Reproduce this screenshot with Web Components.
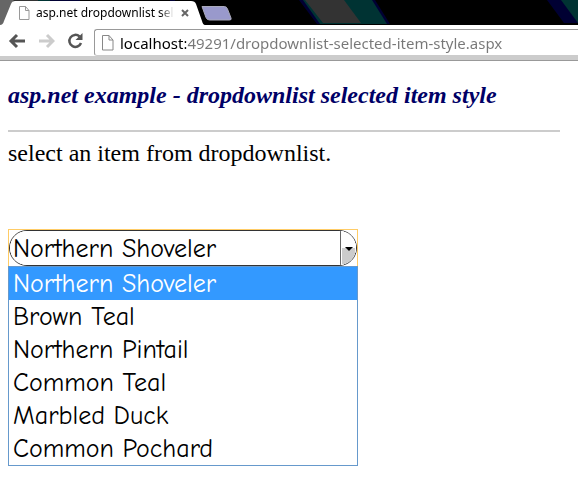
<!DOCTYPE html>
<html lang="en">
<head>
<meta charset="utf-8">
<title>asp.net dropdownlist selected item style</title>
<style>
    body {
        margin: 0;
        min-height: 100vh;
        background: #fff;
        font-family: "Liberation Serif", serif;
    }
</style>
</head>
<body>

<browser-window>
    <browser-tab slot="tabs">asp.net dropdownlist selected item style</browser-tab>
    <nav-bar slot="toolbar" url="localhost:49291/dropdownlist-selected-item-style.aspx"></nav-bar>
    <example-page>
        <span slot="title">asp.net example - dropdownlist selected item style</span>
        <span slot="intro">select an item from dropdownlist.</span>
        <drop-down label="select an item from dropdownlist">
            <option selected>Northern Shoveler</option>
            <option>Brown Teal</option>
            <option>Northern Pintail</option>
            <option>Common Teal</option>
            <option>Marbled Duck</option>
            <option>Common Pochard</option>
        </drop-down>
    </example-page>
</browser-window>

<script>
// Attach an open shadow root filled from markup
function render(element, html) {
    const template = document.createElement('template');
    template.innerHTML = html;
    element.attachShadow({ mode: 'open' });
    element.shadowRoot.appendChild(template.content.cloneNode(true));
}

class BrowserWindow extends HTMLElement {
    constructor() {
        super();
        render(this, `
            <style>
                :host {
                    display: block;
                }
                .strip {
                    position: relative;
                    display: flex;
                    align-items: flex-start;
                    height: 25px;
                    background: #000;
                    overflow: hidden;
                }
                .theme {
                    position: absolute;
                    top: 0;
                    left: 0;
                }
                .new-tab {
                    position: relative;
                    margin: 6px 0 0 -4px;
                    padding: 0;
                    border: 0;
                    background: none;
                    height: 15px;
                }
                .new-tab svg {
                    display: block;
                }
            </style>
            <div class="strip">
                <svg class="theme" width="1200" height="25" aria-hidden="true">
                    <path d="M0 0h14L3 25H0z" fill="#666"/>
                    <path d="M14 0h24v1H14z" fill="#333"/>
                    <path d="M38 0h12v1H38z" fill="#033"/>
                    <path d="M50 0h30v1H50z" fill="#003"/>
                    <path d="M170 0h5v1h-5z" fill="#003"/>
                    <path d="M299 0h76l15 24h-73z" fill="#003"/>
                    <path d="M303 0h69l15 24h-67z" fill="#033"/>
                    <path d="M305 0h39l17 23h-38z" fill="#333"/>
                    <path d="M547 0h17l17 23h-17z" fill="#003"/>
                    <path d="M561 0h40v23h-23z" fill="#033"/>
                </svg>
                <slot name="tabs"></slot>
                <button class="new-tab" aria-label="New tab">
                    <svg width="31" height="15" viewBox="0 0 31 15">
                        <path d="M1 .5h22.500q2 0 3 2.500l3.500 9q.8 2-1.500 2H8.500q-2.500 0-3.500-2.500z" fill="#99c" stroke="#aab"/>
                    </svg>
                </button>
            </div>
            <slot name="toolbar"></slot>
            <slot></slot>
        `);
    }
}

class BrowserTab extends HTMLElement {
    constructor() {
        super();
        render(this, `
            <style>
                :host {
                    position: relative;
                    display: flex;
                    align-items: center;
                    box-sizing: border-box;
                    width: 205px;
                    height: 24px;
                    margin-top: 1px;
                    padding: 0 15px 0 18px;
                    font: 12px/24px "Noto Sans", sans-serif;
                    color: #000;
                }
                .shape {
                    position: absolute;
                    top: 0;
                    left: 0;
                }
                .icon, .title, button {
                    position: relative;
                }
                .icon {
                    flex: none;
                    margin-right: 6px;
                }
                .title {
                    flex: 1;
                    overflow: hidden;
                    white-space: nowrap;
                    -webkit-mask-image: linear-gradient(to left, transparent, #000 14px);
                    mask-image: linear-gradient(to left, transparent, #000 14px);
                }
                button {
                    flex: none;
                    margin-left: 6px;
                    padding: 0;
                    border: 0;
                    background: none;
                    width: 10px;
                    height: 10px;
                }
                button svg {
                    display: block;
                }
            </style>
            <svg class="shape" width="205" height="24" aria-hidden="true">
                <path d="M0 24q3 0 4-4L11 3q1-3 4-3h176q4 0 5 3l6 17q1 4 3 4z" fill="#fff"/>
            </svg>
            <svg class="icon" width="12" height="14" viewBox="0 0 12 14" aria-hidden="true">
                <path d="M1.500.5h6l3.500 4v9h-9.500zM7.500.5v4h3.500" fill="#fff" stroke="#999"/>
            </svg>
            <span class="title"><slot></slot></span>
            <button aria-label="Close tab">
                <svg width="10" height="10" viewBox="0 0 10 10">
                    <path d="M2 2l6 6M8 2l-6 6" stroke="#666" stroke-width="2"/>
                </svg>
            </button>
        `);
    }
}

class NavBar extends HTMLElement {
    constructor() {
        super();
        render(this, `
            <style>
                :host {
                    display: block;
                    background: #fff;
                    border-bottom: 1px solid #999;
                }
                .bar {
                    display: flex;
                    align-items: center;
                    height: 31px;
                    padding-left: 8px;
                    border-bottom: 4px solid #ccc;
                }
                button {
                    flex: none;
                    width: 18px;
                    height: 18px;
                    margin-right: 11px;
                    padding: 0;
                    border: 0;
                    background: none;
                }
                svg {
                    display: block;
                }
                .address {
                    flex: 1;
                    display: flex;
                    align-items: center;
                    box-sizing: border-box;
                    min-width: 0;
                    height: 27px;
                    margin-top: 4px;
                    margin-left: -1px;
                    padding-left: 7px;
                    border: 1px solid #999;
                    border-right: 0;
                    border-bottom-color: #ccc;
                    border-radius: 3px 0 0 3px;
                }
                .address svg {
                    flex: none;
                    margin-right: 6px;
                }
                /* host name in black, the rest of the address in grey */
                input {
                    flex: 1;
                    min-width: 0;
                    padding: 0;
                    border: 0;
                    outline: 0;
                    font: 15px/22px "Noto Sans", sans-serif;
                    color: transparent;
                    background: linear-gradient(to right, #000 66px, #777 66px);
                    -webkit-background-clip: text;
                    background-clip: text;
                }
            </style>
            <div class="bar">
                <button aria-label="Back">
                    <svg width="18" height="18" viewBox="0 0 18 18" fill="none" stroke="#555" stroke-width="3">
                        <path d="M3.500 9H17M9 3L3 9l6 6"/>
                    </svg>
                </button>
                <button aria-label="Forward">
                    <svg width="18" height="18" viewBox="0 0 18 18" fill="none" stroke="#ccc" stroke-width="3">
                        <path d="M2 9h13.500M10 3l6 6-6 6"/>
                    </svg>
                </button>
                <button aria-label="Reload">
                    <svg width="18" height="18" viewBox="0 0 18 18">
                        <path d="M13.500 4.500A6 6 0 1 0 15 11" fill="none" stroke="#555" stroke-width="2.500"/>
                        <path d="M16.500 1v7h-7z" fill="#555"/>
                    </svg>
                </button>
                <div class="address">
                    <svg width="12" height="16" viewBox="0 0 12 16" aria-hidden="true">
                        <path d="M.5.5h6.500l4 4.500v10H.5zM7 .5V5h4" fill="#fff" stroke="#888"/>
                    </svg>
                    <input type="text" aria-label="Address" spellcheck="false">
                </div>
            </div>
        `);
        this.shadowRoot.querySelector('input').value = this.getAttribute('url');
    }
}

class ExamplePage extends HTMLElement {
    constructor() {
        super();
        render(this, `
            <style>
                :host {
                    display: block;
                    padding: 20px 18px 15px 8px;
                }
                h2 {
                    margin: 0;
                    font: italic bold 24px/28px "Liberation Serif", serif;
                    color: #006;
                }
                hr {
                    height: 2px;
                    margin: 21px 0 7px;
                    border: 0;
                    background: #ccc;
                }
                p {
                    margin: 0 0 62px;
                    font-size: 24px;
                    line-height: 28px;
                    color: #000;
                }
            </style>
            <h2><slot name="title"></slot></h2>
            <hr>
            <p><slot name="intro"></slot></p>
            <slot></slot>
        `);
    }
}

class DropDown extends HTMLElement {
    constructor() {
        super();
        render(this, `
            <style>
                :host {
                    position: relative;
                    display: block;
                    width: 350px;
                    max-width: 100%;
                    font: 26px/32px "Comic Sans MS", "Comic Neue", "Noto Sans", sans-serif;
                    color: #000;
                }
                .focus {
                    border: 1px solid #fc6;
                    border-bottom: 0;
                }
                .field {
                    position: relative;
                    border: 1px solid #333;
                    border-radius: 18px;
                    overflow: hidden;
                }
                select {
                    display: block;
                    width: 100%;
                    height: 34px;
                    padding: 2px 20px 0 3px;
                    border: 0;
                    outline: 0;
                    appearance: none;
                    background: #fff;
                    font: inherit;
                    color: inherit;
                }
                .arrow {
                    position: absolute;
                    top: 0;
                    right: 0;
                    bottom: 0;
                    width: 15px;
                    border-left: 1px solid #666;
                    background: linear-gradient(#fff 50%, #ccc 50%);
                    box-shadow: inset 0 0 0 1px #fff;
                    pointer-events: none;
                }
                .arrow::after {
                    content: "";
                    position: absolute;
                    top: 16px;
                    left: 4px;
                    border: 4px solid transparent;
                    border-top-color: #000;
                    border-bottom: 0;
                }
                ul {
                    position: absolute;
                    top: 100%;
                    left: 0;
                    right: 0;
                    margin: 0;
                    padding: 0;
                    border: 1px solid #69c;
                    background: #fff;
                    list-style: none;
                }
                li {
                    padding: 1px 4px 0;
                }
                li[aria-selected="true"] {
                    background: #39f;
                    color: #fff;
                }
            </style>
            <div class="focus">
                <div class="field">
                    <select></select>
                    <span class="arrow"></span>
                </div>
            </div>
            <ul role="listbox"></ul>
        `);

        this.select = this.shadowRoot.querySelector('select');
        this.list = this.shadowRoot.querySelector('ul');
        this.select.setAttribute('aria-label', this.getAttribute('label'));
        this.list.setAttribute('aria-label', this.getAttribute('label'));

        this.querySelectorAll('option').forEach((option, index) => {
            this.select.appendChild(option.cloneNode(true));
            const item = document.createElement('li');
            item.setAttribute('role', 'option');
            item.textContent = option.textContent;
            item.addEventListener('click', () => {
                this.select.selectedIndex = index;
                this.update();
            });
            this.list.appendChild(item);
        });

        this.select.addEventListener('change', () => this.update());
        this.update();
    }

    // Highlight the row of the current value
    update() {
        [...this.list.children].forEach((item, index) => {
            item.setAttribute('aria-selected', index === this.select.selectedIndex);
        });
    }
}

customElements.define('browser-window', BrowserWindow);
customElements.define('browser-tab', BrowserTab);
customElements.define('nav-bar', NavBar);
customElements.define('example-page', ExamplePage);
customElements.define('drop-down', DropDown);
</script>
</body>
</html>
